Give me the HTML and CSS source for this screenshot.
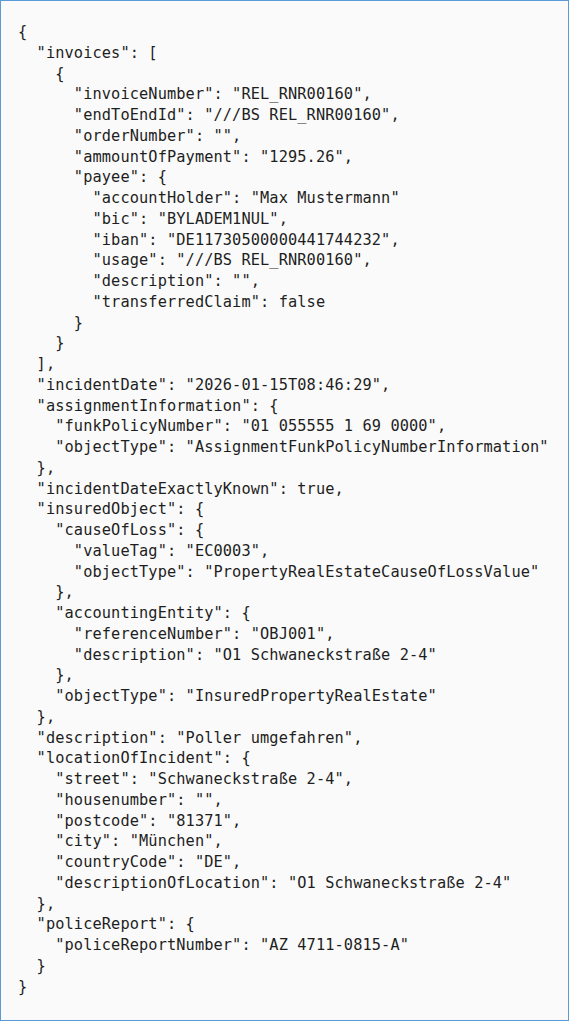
FILE: index.html
```html
<!DOCTYPE html>
<html lang="de">
<head>
<meta charset="utf-8">
<title>JSON</title>
<link rel="stylesheet" href="styles.css">
</head>
<body>
<div class="code-box">
<pre class="code">{
  "invoices": [
    {
      "invoiceNumber": "REL_RNR00160",
      "endToEndId": "///BS REL_RNR00160",
      "orderNumber": "",
      "ammountOfPayment": "1295.26",
      "payee": {
        "accountHolder": "Max Mustermann"
        "bic": "BYLADEM1NUL",
        "iban": "DE11730500000441744232",
        "usage": "///BS REL_RNR00160",
        "description": "",
        "transferredClaim": false
      }
    }
  ],
  "incidentDate": "2026-01-15T08:46:29",
  "assignmentInformation": {
    "funkPolicyNumber": "01 055555 1 69 0000",
    "objectType": "AssignmentFunkPolicyNumberInformation"
  },
  "incidentDateExactlyKnown": true,
  "insuredObject": {
    "causeOfLoss": {
      "valueTag": "EC0003",
      "objectType": "PropertyRealEstateCauseOfLossValue"
    },
    "accountingEntity": {
      "referenceNumber": "OBJ001",
      "description": "O1 Schwaneckstraße 2-4"
    },
    "objectType": "InsuredPropertyRealEstate"
  },
  "description": "Poller umgefahren",
  "locationOfIncident": {
    "street": "Schwaneckstraße 2-4",
    "housenumber": "",
    "postcode": "81371",
    "city": "München",
    "countryCode": "DE",
    "descriptionOfLocation": "O1 Schwaneckstraße 2-4"
  },
  "policeReport": {
    "policeReportNumber": "AZ 4711-0815-A"
  }
}</pre>
</div>
</body>
</html>
```

FILE: styles.css
```css
html, body {
  margin: 0;
  padding: 0;
  background: #ffffff;
}

.code-box {
  width: 569px;
  height: 1021px;
  box-sizing: border-box;
  border: 1px solid #5b9bd5;
  background: #fafafa;
  padding: 21px 0 0 17px;
}

.code {
  margin: 0;
  font-family: "DejaVu Sans Mono", monospace;
  font-size: 15.3px;
  letter-spacing: 0.1px;
  line-height: 20.75px;
  color: #1e1e1e;
}
```
